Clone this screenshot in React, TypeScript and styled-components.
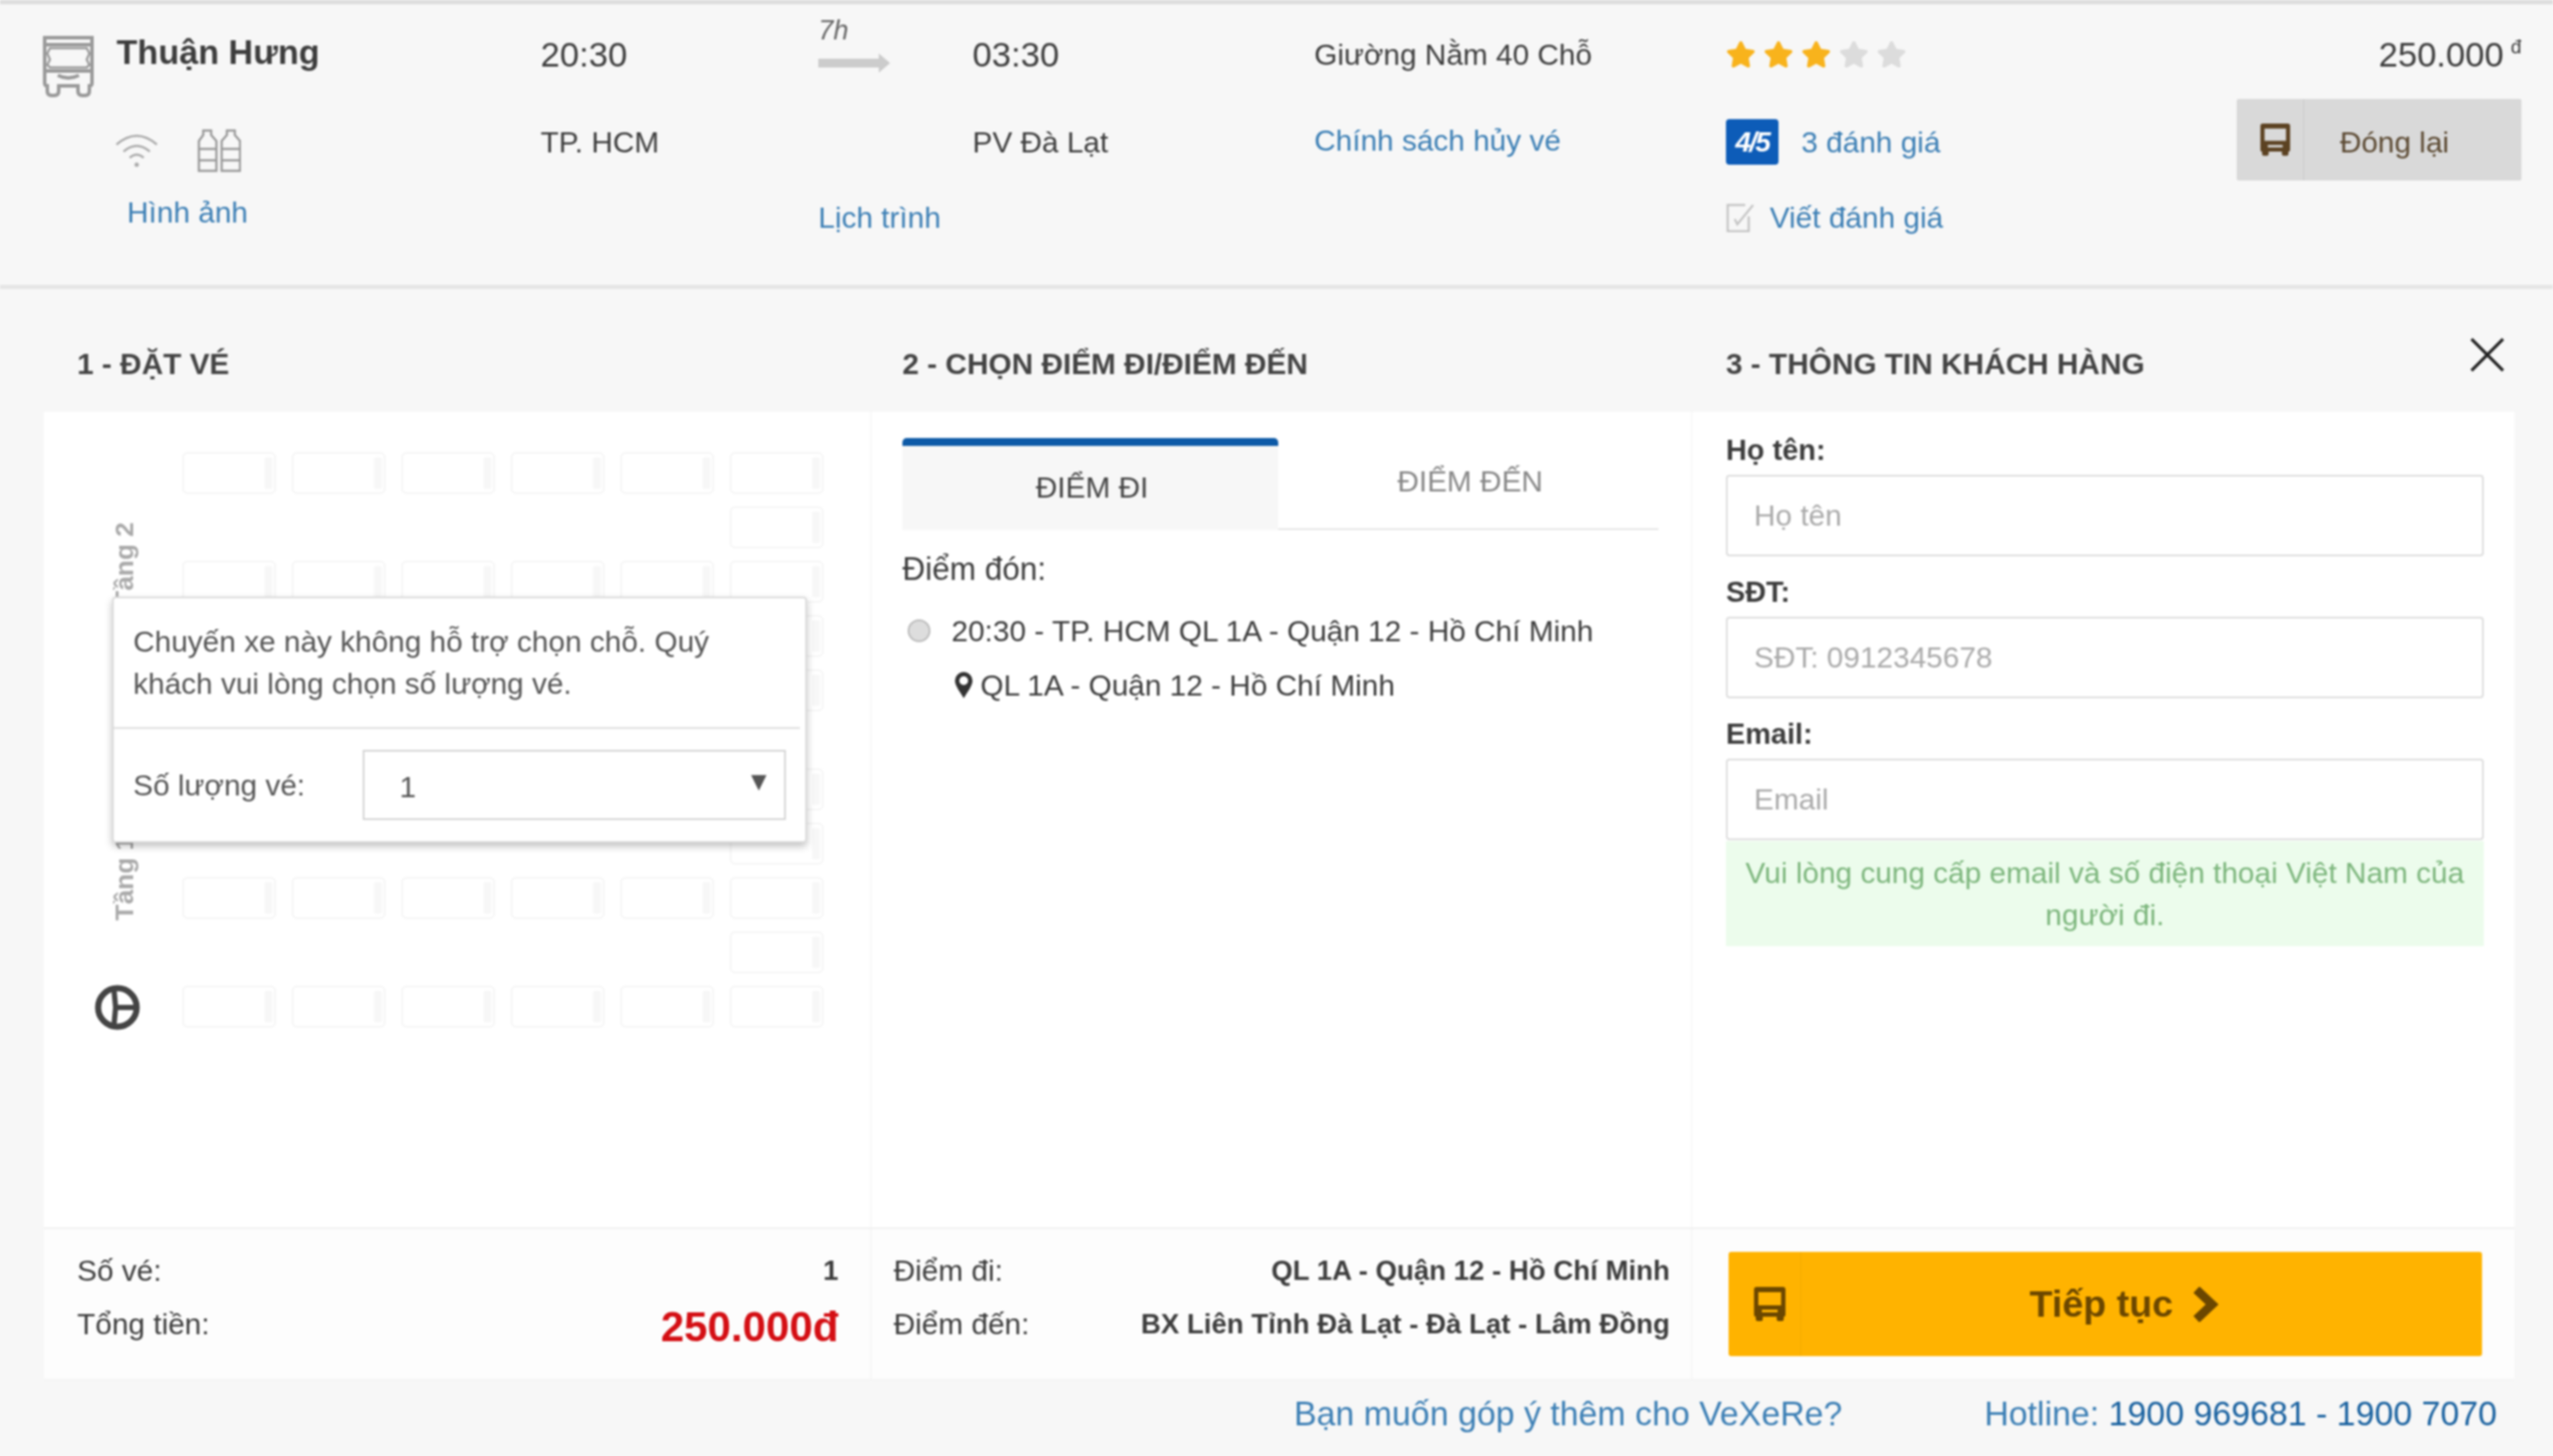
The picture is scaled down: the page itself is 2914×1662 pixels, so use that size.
import React from 'react'
import styled, { createGlobalStyle } from 'styled-components'
import { FaStar } from 'react-icons/fa'

const GlobalStyle = createGlobalStyle`
  html, body {
    margin: 0;
    padding: 0;
    background: #f7f7f7;
  }
  * {
    box-sizing: border-box;
  }
  body {
    font-family: "Liberation Sans", Arial, sans-serif;
    font-size: 34px;
    color: #3d3d3d;
  }
`

const Page = styled.div`
  width: 2914px;
  height: 1662px;
  overflow: hidden;
  background: #f7f7f7;
  border-top: 5px solid #dedede;
  filter: blur(0.8px);
`

/* trip summary */
const Trip = styled.div`
  display: grid;
  grid-template-columns: 569px 317px 176px 390px 470px 583px 325px;
  grid-template-rows: 100px 100px 72px;
  height: 325px;
  padding: 7px 0 0 48px;
  border-bottom: 5px solid #e6e6e6;
`

const Cell = styled.div<{ $row: number; $col: number }>`
  grid-row: ${p => p.$row};
  grid-column: ${p => p.$col};
  display: flex;
  align-items: center;
  white-space: nowrap;
`

const Operator = styled(Cell)`
  align-items: flex-start;
  gap: 25px;
  padding-top: 28px;
`

const OperatorName = styled.div`
  font-size: 39px;
  font-weight: bold;
  color: #3d3d3d;
  margin-top: -2px;
`

const Amenities = styled(Cell)`
  gap: 45px;
  padding: 20px 0 0 84px;
`

const PhotoLink = styled.a`
  color: #3c7fb5;
  margin-left: 97px;
  margin-top: -12px;
`

const Time = styled.span`
  font-size: 39.5px;
  color: #3d3d3d;
`

const Duration = styled(Cell)`
  flex-direction: column;
  align-items: flex-start;
  justify-content: flex-start;
`

const Hours = styled.i`
  font-size: 31px;
  line-height: 34px;
  margin-top: 6px;
  color: #666;
`

const ArrowLine = styled.div`
  position: relative;
  width: 70px;
  height: 10px;
  margin-top: 15px;
  background: #ccc;
  &::after {
    content: '';
    position: absolute;
    right: -12px;
    top: -6px;
    border-left: 13px solid #ccc;
    border-top: 11px solid transparent;
    border-bottom: 11px solid transparent;
  }
`

const Link = styled.a`
  color: #3c7fb5;
`

const PolicyLink = styled(Link)`
  margin-top: -4px;
`

const Stars = styled.div`
  display: flex;
  gap: 9px;
`

const StarMark = styled(FaStar)<{ $on: boolean }>`
  width: 34px;
  height: 34px;
  color: ${p => (p.$on ? '#f8b31c' : '#dcdcdc')};
`

const Score = styled.span`
  width: 60px;
  height: 52px;
  margin-right: 26px;
  border-radius: 4px;
  background: #0d5cb8;
  color: #fff;
  font-size: 32px;
  font-weight: bold;
  font-style: italic;
  display: flex;
  align-items: center;
  justify-content: center;
  letter-spacing: -2px;
`

const WriteReview = styled(Cell)`
  gap: 16px;
`

const Price = styled(Cell)`
  justify-content: flex-end;
`

const Currency = styled.span`
  font-size: 22px;
  margin: -16px 0 0 8px;
`

const CloseButton = styled.button`
  height: 93px;
  width: 325px;
  border: 0;
  padding: 0;
  font: inherit;
  color: #5c4a33;
  background: #d9d9d9;
  display: grid;
  grid-template-columns: 77px 1fr;
  align-items: center;
  justify-items: center;
  margin-top: -5px;
  border-radius: 2px;
`

const ButtonIcon = styled.span<{ $line: string }>`
  height: 100%;
  width: 100%;
  padding-left: 12px;
  display: flex;
  align-items: center;
  justify-content: center;
  border-right: 1px solid ${p => p.$line};
`

const CloseLabel = styled.span`
  padding: 6px 42px 0 0;
`

/* step titles */
const Steps = styled.div`
  display: grid;
  grid-template-columns: 945px 937px 938px;
  position: relative;
  height: 140px;
  margin-left: 50px;
  width: 2820px;
  align-items: center;
`

const StepTitle = styled.div<{ $pad: number }>`
  font-size: 34px;
  font-weight: bold;
  color: #444;
  padding-left: ${p => p.$pad}px;
  padding-top: 31px;
`

const CloseIcon = styled.svg`
  position: absolute;
  right: 11px;
  top: 55px;
  width: 40px;
  height: 40px;
`

/* white panel */
const Panel = styled.div`
  margin-left: 50px;
  width: 2820px;
  background: #fff;
`

const Columns = styled.div`
  display: grid;
  grid-template-columns: 945px 937px 938px;
  height: 931px;
`

const SeatColumn = styled.div`
  position: relative;
  padding-top: 46px;
  border-right: 2px solid #f8f8f8;
`

const Floor = styled.div`
  display: flex;
  margin-bottom: 65px;
`

const Rail = styled.div`
  width: 158px;
  flex: none;
  display: flex;
  flex-direction: column;
  align-items: flex-start;
  position: relative;
`

const FloorLabel = styled.div<{ $top: number }>`
  writing-mode: vertical-rl;
  transform: rotate(180deg);
  font-size: 30px;
  font-weight: bold;
  line-height: 30px;
  color: #aaa;
  margin: ${p => p.$top}px 0 0 77px;
`

const Wheel = styled.svg`
  position: absolute;
  left: 58px;
  bottom: -3px;
  width: 52px;
  height: 52px;
`

const SeatGrid = styled.div`
  display: grid;
  grid-template-columns: repeat(6, 107px);
  grid-auto-rows: 48px;
  column-gap: 18px;
  row-gap: 14px;
`

const Seat = styled.div<{ $last?: boolean }>`
  position: relative;
  border: 2px solid #f5f5f5;
  border-radius: 6px;
  grid-column: ${p => (p.$last ? 6 : 'auto')};
  &::after {
    content: '';
    position: absolute;
    right: 2px;
    top: 4px;
    bottom: 4px;
    width: 9px;
    background: #f7f7f7;
    border-radius: 2px;
  }
`

const Popup = styled.div`
  position: absolute;
  left: 78px;
  top: 211px;
  width: 793px;
  height: 281px;
  background: #fff;
  border: 2px solid #ddd;
  border-radius: 4px;
  box-shadow: 0 4px 8px rgba(0, 0, 0, 0.25);
  color: #555;
`

const PopupText = styled.div`
  height: 149px;
  padding: 25px 20px 0 22px;
  line-height: 48px;
  border-bottom: 2px solid #ddd;
  margin: 0 6px 0 0;
`

const PopupRow = styled.div`
  display: flex;
  align-items: center;
  justify-content: space-between;
  padding: 24px 22px 0 22px;
`

const QuantitySelect = styled.div`
  width: 483px;
  height: 80px;
  border: 2px solid #d4d4d4;
  display: flex;
  align-items: center;
  justify-content: space-between;
  padding: 4px 14px 0 40px;
`

const Caret = styled.span`
  font-size: 30px;
  color: #555;
  margin-top: -12px;
`

const PointColumn = styled.div`
  padding: 30px 0 0 35px;
  border-right: 2px solid #f8f8f8;
`

const Tabs = styled.div`
  display: flex;
  width: 863px;
  height: 105px;
`

const Tab = styled.div<{ $active?: boolean }>`
  flex: none;
  width: ${p => (p.$active ? 429 : 434)}px;
  display: flex;
  justify-content: center;
  align-items: center;
  padding-bottom: ${p => (p.$active ? 0 : 14)}px;
  padding-left: 4px;
  border-top: 9px solid ${p => (p.$active ? '#0d5aa7' : 'transparent')};
  border-bottom: 2px solid ${p => (p.$active ? '#f7f7f7' : '#e6e6e6')};
  border-radius: 5px 5px 0 0;
  background: ${p => (p.$active ? '#f7f7f7' : '#fff')};
  color: ${p => (p.$active ? '#444' : '#888')};
`

const PickupTitle = styled.div`
  font-size: 36px;
  margin-top: 24px;
  line-height: 42px;
`

const PickupLine = styled.div`
  display: flex;
  align-items: center;
  margin-top: 28px;
  height: 42px;
`

const Radio = styled.span`
  width: 26px;
  height: 26px;
  border-radius: 50%;
  background: #ddd;
  border: 2px solid #bbb;
  margin: 0 24px 0 6px;
  flex: none;
`

const AddressLine = styled.div`
  display: flex;
  align-items: center;
  gap: 9px;
  height: 42px;
  margin: 20px 0 0 60px;
`

const CustomerColumn = styled.div`
  padding: 24px 35px 0 38px;
`

const FieldLabel = styled.label`
  display: block;
  height: 40px;
  line-height: 40px;
  margin: 21px 0 8px;
  font-weight: bold;
  font-size: 33px;
  &:first-child {
    margin-top: 0;
  }
`

const TextInput = styled.input`
  display: block;
  width: 100%;
  height: 93px;
  border: 2px solid #ddd;
  border-radius: 4px;
  padding: 0 30px;
  font: inherit;
  background: #fff;
  &::placeholder {
    color: #aaa;
    opacity: 1;
  }
`

const Notice = styled.div`
  margin-top: 1px;
  padding: 12px 10px 12px;
  background: #ecfcec;
  color: #7db67d;
  line-height: 48px;
  text-align: center;
`

/* totals */
const Totals = styled.div`
  display: grid;
  grid-template-columns: 945px 937px 938px;
  height: 175px;
  background: #fdfdfd;
  border-top: 2px solid #f0f0f0;
  border-bottom: 2px solid #f4f4f4;
`

const TotalGroup = styled.div<{ $left: number; $right: number }>`
  padding: 23px ${p => p.$right}px 0 ${p => p.$left}px;
  border-right: 2px solid #f6f6f6;
`

const TotalRow = styled.div`
  display: flex;
  justify-content: space-between;
  align-items: center;
  height: 48px;
  margin-bottom: 13px;
`

const Strong = styled.b`
  font-size: 31.5px;
`

const Amount = styled.b`
  font-size: 48px;
  color: #d40f14;
  margin-top: 6px;
`

const ContinueWrap = styled.div`
  padding: 26px 37px 0 41px;
`

const ContinueButton = styled.button`
  position: relative;
  width: 860px;
  height: 119px;
  border: 0;
  border-radius: 3px;
  padding: 0;
  background: #ffb300;
  color: #6b4700;
  font: inherit;
  font-size: 43px;
  font-weight: bold;
  display: grid;
  grid-template-columns: 83px 1fr;
  align-items: center;
`

const ContinueLabel = styled.span`
  display: flex;
  align-items: center;
  justify-content: center;
  gap: 20px;
  padding-right: 40px;
`

/* bottom links */
const FooterLinks = styled.div`
  display: flex;
  justify-content: flex-end;
  align-items: center;
  gap: 162px;
  height: 76px;
  padding-right: 64px;
  font-size: 38.7px;
  color: #3c7fb5;
`

const Hotline = styled.span`
  b {
    font-weight: normal;
    color: #1a62a0;
  }
`

function BusFront(): JSX.Element {
  return (
    <svg width="60" height="72" viewBox="0 0 60 72" fill="none" stroke="#999" strokeWidth="4">
      <path d="M3 3h54v52q0 3-3 3v6q0 5-5 5h-3q-5 0-5-5v-6H19v6q0 5-5 5h-3q-5 0-5-5v-6q-3 0-3-3z" />
      <path d="M3 11h54M3 41h54" />
      <path d="M9 15h42l3 6-3 7 3 6-3 3H9l-3-3 3-6-3-7z" strokeWidth="2.5" />
      <path d="M18 46q12 6 24 0" />
    </svg>
  )
}

function WifiIcon(): JSX.Element {
  return (
    <svg width="48" height="40" viewBox="0 0 48 40" fill="none" stroke="#aaa" strokeWidth="2.5">
      <path d="M1 13q23-20 46 0M9 21q15-13 30 0M16 28q8-7 16 0" />
      <circle cx="24" cy="36" r="2.5" fill="#aaa" stroke="none" />
    </svg>
  )
}

function BottlesIcon(): JSX.Element {
  return (
    <svg width="50" height="50" viewBox="0 0 50 50" fill="none" stroke="#999" strokeWidth="2.5">
      <path d="M7 2h9v5l6 7v34H2V14l5-7zM2 23h20M2 36h20" />
      <path d="M34 2h9v5l6 7v34H28V14l6-7zM28 23h21M28 36h21" />
    </svg>
  )
}

function BusSolid({ color, size }: { color: string; size: number }): JSX.Element {
  return (
    <svg width={size} height={size * 1.08} viewBox="0 0 36 39" fill={color}>
      <path
        fillRule="evenodd"
        d="M3 0h30q3 0 3 3v29q0 2-2 2v3q0 2-2 2h-4q-2 0-2-2v-3H10v3q0 2-2 2H4q-2 0-2-2v-3q-2 0-2-2V3q0-3 3-3zM5 6v15h26V6zM9 26v3h18v-3z"
      />
    </svg>
  )
}

function ReviewIcon(): JSX.Element {
  return (
    <svg width="34" height="34" viewBox="0 0 34 34" fill="none" stroke="#c4c4c4" strokeWidth="2.5">
      <path d="M22 3H2v30h24V16" />
      <path d="M10 19l3 6 18-22" />
    </svg>
  )
}

function PinIcon(): JSX.Element {
  return (
    <svg width="20" height="30" viewBox="0 0 20 30">
      <path
        fill="#333"
        fillRule="evenodd"
        d="M10 0a10 10 0 0 1 10 10c0 6-6 13-10 20C6 23 0 16 0 10A10 10 0 0 1 10 0zm0 5a5 5 0 1 0 0 10 5 5 0 0 0 0-10z"
      />
    </svg>
  )
}

function NextIcon(): JSX.Element {
  return (
    <svg width="32" height="40" viewBox="0 0 32 40" fill="none" stroke="#6b4700" strokeWidth="10">
      <path d="M6 3l18 17L6 37" />
    </svg>
  )
}

const seatLayout = [6, 1, 6, 1, 6]

function Seats(): JSX.Element {
  return (
    <SeatGrid>
      {seatLayout.flatMap((count, row) =>
        Array.from({ length: count }, (_, i) => <Seat key={`${row}-${i}`} $last={count === 1} />)
      )}
    </SeatGrid>
  )
}

export default function App(): JSX.Element {
  return (
    <Page>
      <GlobalStyle />
      <Trip>
        <Operator $row={1} $col={1}>
          <BusFront />
          <OperatorName>Thuận Hưng</OperatorName>
        </Operator>
        <Amenities $row={2} $col={1}>
          <WifiIcon />
          <BottlesIcon />
        </Amenities>
        <Cell $row={3} $col={1}>
          <PhotoLink>Hình ảnh</PhotoLink>
        </Cell>

        <Cell $row={1} $col={2}>
          <Time>20:30</Time>
        </Cell>
        <Cell $row={2} $col={2}>
          TP. HCM
        </Cell>

        <Duration $row={1} $col={3}>
          <Hours>7h</Hours>
          <ArrowLine />
        </Duration>
        <Cell $row={3} $col={3}>
          <Link>Lịch trình</Link>
        </Cell>

        <Cell $row={1} $col={4}>
          <Time>03:30</Time>
        </Cell>
        <Cell $row={2} $col={4}>
          PV Đà Lạt
        </Cell>

        <Cell $row={1} $col={5}>
          Giường Nằm 40 Chỗ
        </Cell>
        <Cell $row={2} $col={5}>
          <PolicyLink>Chính sách hủy vé</PolicyLink>
        </Cell>

        <Cell $row={1} $col={6}>
          <Stars>
            {[1, 2, 3, 4, 5].map(n => (
              <StarMark key={n} $on={n <= 3} />
            ))}
          </Stars>
        </Cell>
        <Cell $row={2} $col={6}>
          <Score>4/5</Score>
          <Link>3 đánh giá</Link>
        </Cell>
        <WriteReview $row={3} $col={6}>
          <ReviewIcon />
          <Link>Viết đánh giá</Link>
        </WriteReview>

        <Price $row={1} $col={7}>
          <Time>250.000</Time>
          <Currency>đ</Currency>
        </Price>
        <Cell $row={2} $col={7}>
          <CloseButton>
            <ButtonIcon $line="#c9c9c9">
              <BusSolid color="#5c4222" size={34} />
            </ButtonIcon>
            <CloseLabel>Đóng lại</CloseLabel>
          </CloseButton>
        </Cell>
      </Trip>

      <Steps>
        <StepTitle $pad={38}>1 - ĐẶT VÉ</StepTitle>
        <StepTitle $pad={35}>2 - CHỌN ĐIỂM ĐI/ĐIỂM ĐẾN</StepTitle>
        <StepTitle $pad={38}>3 - THÔNG TIN KHÁCH HÀNG</StepTitle>
        <CloseIcon viewBox="0 0 40 40" stroke="#222" strokeWidth="3.5">
          <path d="M2 2l36 36M38 2L2 38" />
        </CloseIcon>
      </Steps>

      <Panel>
        <Columns>
          <SeatColumn>
            <Floor>
              <Rail>
                <FloorLabel $top={80}>Tầng 2</FloorLabel>
              </Rail>
              <Seats />
            </Floor>
            <Floor>
              <Rail>
                <FloorLabel $top={77}>Tầng 1</FloorLabel>
                <Wheel viewBox="0 0 52 52">
                  <circle cx="26" cy="26" r="22" fill="none" stroke="#444" strokeWidth="7" />
                  <path d="M24 26L22 5M24 26h23M24 26l-2 21" fill="none" stroke="#444" strokeWidth="6" />
                </Wheel>
              </Rail>
              <Seats />
            </Floor>
            <Popup>
              <PopupText>Chuyến xe này không hỗ trợ chọn chỗ. Quý khách vui lòng chọn số lượng vé.</PopupText>
              <PopupRow>
                <span>Số lượng vé:</span>
                <QuantitySelect>
                  <span>1</span>
                  <Caret>▼</Caret>
                </QuantitySelect>
              </PopupRow>
            </Popup>
          </SeatColumn>

          <PointColumn>
            <Tabs>
              <Tab $active>ĐIỂM ĐI</Tab>
              <Tab>ĐIỂM ĐẾN</Tab>
            </Tabs>
            <PickupTitle>Điểm đón:</PickupTitle>
            <PickupLine>
              <Radio />
              20:30 - TP. HCM QL 1A - Quận 12 - Hồ Chí Minh
            </PickupLine>
            <AddressLine>
              <PinIcon />
              QL 1A - Quận 12 - Hồ Chí Minh
            </AddressLine>
          </PointColumn>

          <CustomerColumn>
            <FieldLabel>Họ tên:</FieldLabel>
            <TextInput placeholder="Họ tên" />
            <FieldLabel>SĐT:</FieldLabel>
            <TextInput placeholder="SĐT: 0912345678" />
            <FieldLabel>Email:</FieldLabel>
            <TextInput placeholder="Email" />
            <Notice>Vui lòng cung cấp email và số điện thoại Việt Nam của người đi.</Notice>
          </CustomerColumn>
        </Columns>

        <Totals>
          <TotalGroup $left={38} $right={36}>
            <TotalRow>
              <span>Số vé:</span>
              <Strong>1</Strong>
            </TotalRow>
            <TotalRow>
              <span>Tổng tiền:</span>
              <Amount>250.000đ</Amount>
            </TotalRow>
          </TotalGroup>
          <TotalGroup $left={25} $right={24}>
            <TotalRow>
              <span>Điểm đi:</span>
              <Strong>QL 1A - Quận 12 - Hồ Chí Minh</Strong>
            </TotalRow>
            <TotalRow>
              <span>Điểm đến:</span>
              <Strong>BX Liên Tỉnh Đà Lạt - Đà Lạt - Lâm Đồng</Strong>
            </TotalRow>
          </TotalGroup>
          <ContinueWrap>
            <ContinueButton>
              <ButtonIcon $line="#f2aa00">
                <BusSolid color="#6b4700" size={36} />
              </ButtonIcon>
              <ContinueLabel>
                Tiếp tục <NextIcon />
              </ContinueLabel>
            </ContinueButton>
          </ContinueWrap>
        </Totals>
      </Panel>

      <FooterLinks>
        <span>Bạn muốn góp ý thêm cho VeXeRe?</span>
        <Hotline>
          Hotline: <b>1900 969681 - 1900 7070</b>
        </Hotline>
      </FooterLinks>
    </Page>
  )
}
